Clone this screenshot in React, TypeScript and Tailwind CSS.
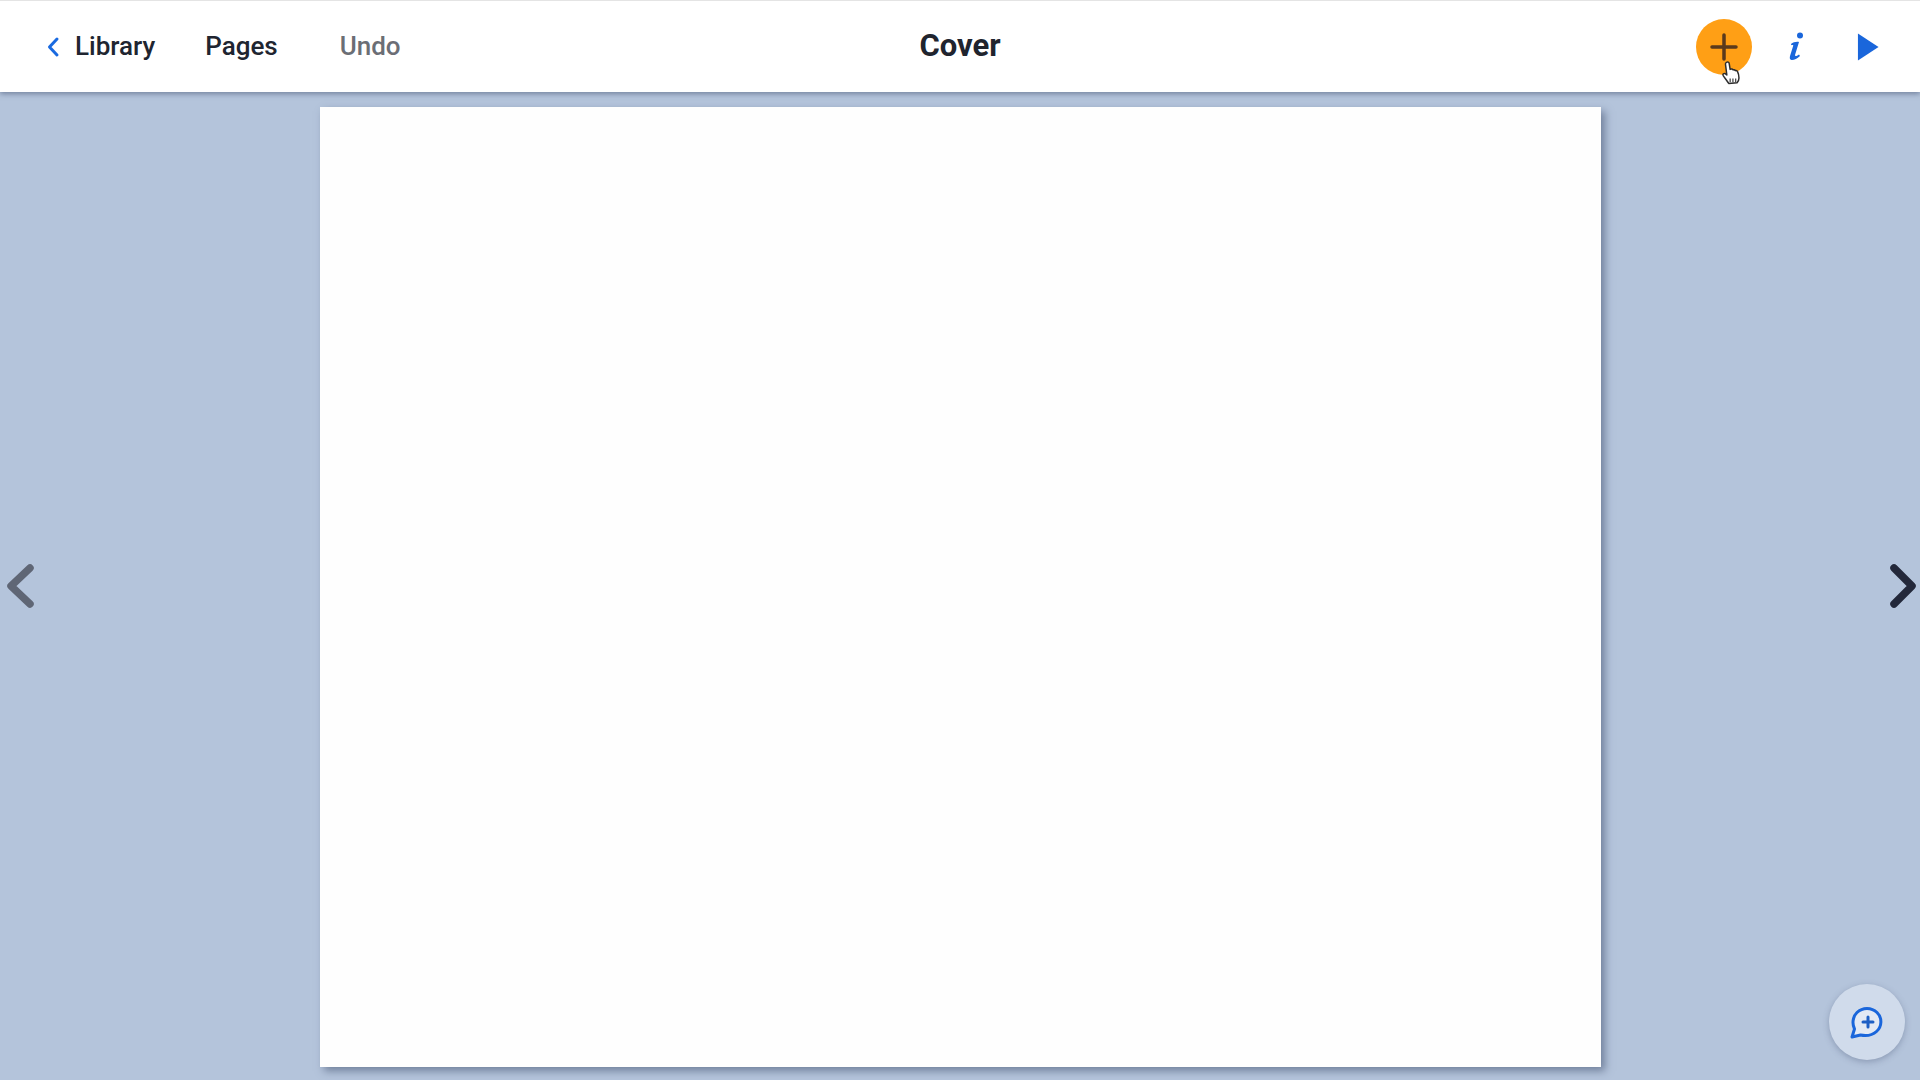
import React from "react";

export default function App() {
  return (
    <div className="relative flex h-[1080px] w-[1920px] flex-col overflow-hidden bg-[#b4c4db] font-['Roboto',sans-serif]">
      <header className="relative z-10 flex h-[92px] shrink-0 items-center justify-between border-t border-[#e4e4e4] bg-white shadow-[0_2px_5px_rgba(90,105,135,0.7)]">
        <nav className="flex items-center pl-[46px] text-[26px] font-medium">
          <svg width="14" height="22" viewBox="0 0 14 22" fill="none" stroke="#1a6ae0" strokeWidth="3" strokeLinecap="round" strokeLinejoin="round">
            <path d="M11 3 L3.5 11 L11 19" />
          </svg>
          <span className="ml-[15px] text-[#202530]">Library</span>
          <span className="ml-[50px] text-[#202530]">Pages</span>
          <span className="ml-[62px] text-[#6b6e75]">Undo</span>
        </nav>
        <h1 className="absolute left-0 right-0 text-center text-[31px] font-bold text-[#20242e]">Cover</h1>
        <div className="relative flex items-center pr-[41px]">
          <div className="flex h-[56px] w-[56px] items-center justify-center rounded-full bg-[#ff9f15]">
            <svg width="30" height="30" viewBox="0 0 30 30" fill="none" stroke="#5a3a1c" strokeWidth="3.500" strokeLinecap="round">
              <path d="M15 3 V27 M3 15 H27" />
            </svg>
          </div>
          <svg className="absolute left-[24px] top-[41px]" width="24" height="26" viewBox="0 0 24 28">
            <path d="M6 2.500c1.300-.8 2.800 0 3 1.400l1 6.200 1-.4c1-.3 1.800.2 2.200 1 .8-.4 1.900-.2 2.400.8.8-.3 1.900 0 2.400 1 .9 1.800 1.500 4.800 1.500 7 0 2.400-1 4-2 5l-9 .8c-1-1.700-3.500-5-6-8.500-1-1.400.7-3 2.200-2l1.700 1.300L5 4.700c-.2-1 .2-1.800 1-2.200Z" fill="#fff" stroke="#2d2d2d" strokeWidth="1.600" strokeLinejoin="round" />
            <path d="M10 20v4 M13 20v4 M16 20v4" stroke="#2d2d2d" strokeWidth="1.200" />
          </svg>
          <svg className="ml-[36px]" width="16" height="30" viewBox="0 0 16 30" fill="#1a66db">
            <circle cx="12" cy="3.500" r="3" />
            <path d="M3 12 C5 10 9 9.500 11 10 L7 23 C7 24.500 8 24.500 11 22.500 L12 24 C9 27 6 28.200 3.500 28 C1.800 27.800 1.500 26 2 24 L5.300 13.500 C4.800 13 4 13 3.300 13.300 Z" />
          </svg>
          <svg className="ml-[53px]" width="22" height="28" viewBox="0 0 24 28" fill="#1a66db" preserveAspectRatio="none">
            <path d="M1 0.500 L23.500 14 L1 27.500 Z" />
          </svg>
        </div>
      </header>

      <main className="flex flex-1 justify-center pt-[15px]">
        <div className="h-[960px] w-[1281px] bg-[#fefefe] shadow-[4px_4px_8px_rgba(70,85,115,0.6)]" />
      </main>

      <svg className="absolute left-[6px] top-[564px]" width="30" height="44" viewBox="0 0 30 44" fill="none" stroke="#5f6675" strokeWidth="7.500" strokeLinecap="round" strokeLinejoin="round">
        <path d="M24 4 L5 22 L24 40" />
      </svg>
      <svg className="absolute left-[1888px] top-[564px]" width="30" height="44" viewBox="0 0 30 44" fill="none" stroke="#23283a" strokeWidth="7.500" strokeLinecap="round" strokeLinejoin="round">
        <path d="M6 4 L24 22 L6 40" />
      </svg>

      <div className="absolute left-[1829px] top-[984px] flex h-[76px] w-[76px] items-center justify-center rounded-full bg-[#d0dbeb] shadow-[0_2px_6px_rgba(90,105,135,0.45)]">
        <svg width="36" height="36" viewBox="0 0 36 36" fill="none" stroke="#1a66db" strokeWidth="3" strokeLinecap="round" strokeLinejoin="round">
          <path d="M3 33 L5.500 25 C3 20 3.500 13 8 8.500 C13.500 3 22.500 3 28 8.500 C33.500 14 33 22.500 27.500 27.500 C23 31.500 16.500 32 11.500 31 Z" fill="#e2e9f4" />
          <path d="M19 13 V23 M14 18 H24" stroke="#1d5fc4" />
        </svg>
      </div>
    </div>
  );
}
